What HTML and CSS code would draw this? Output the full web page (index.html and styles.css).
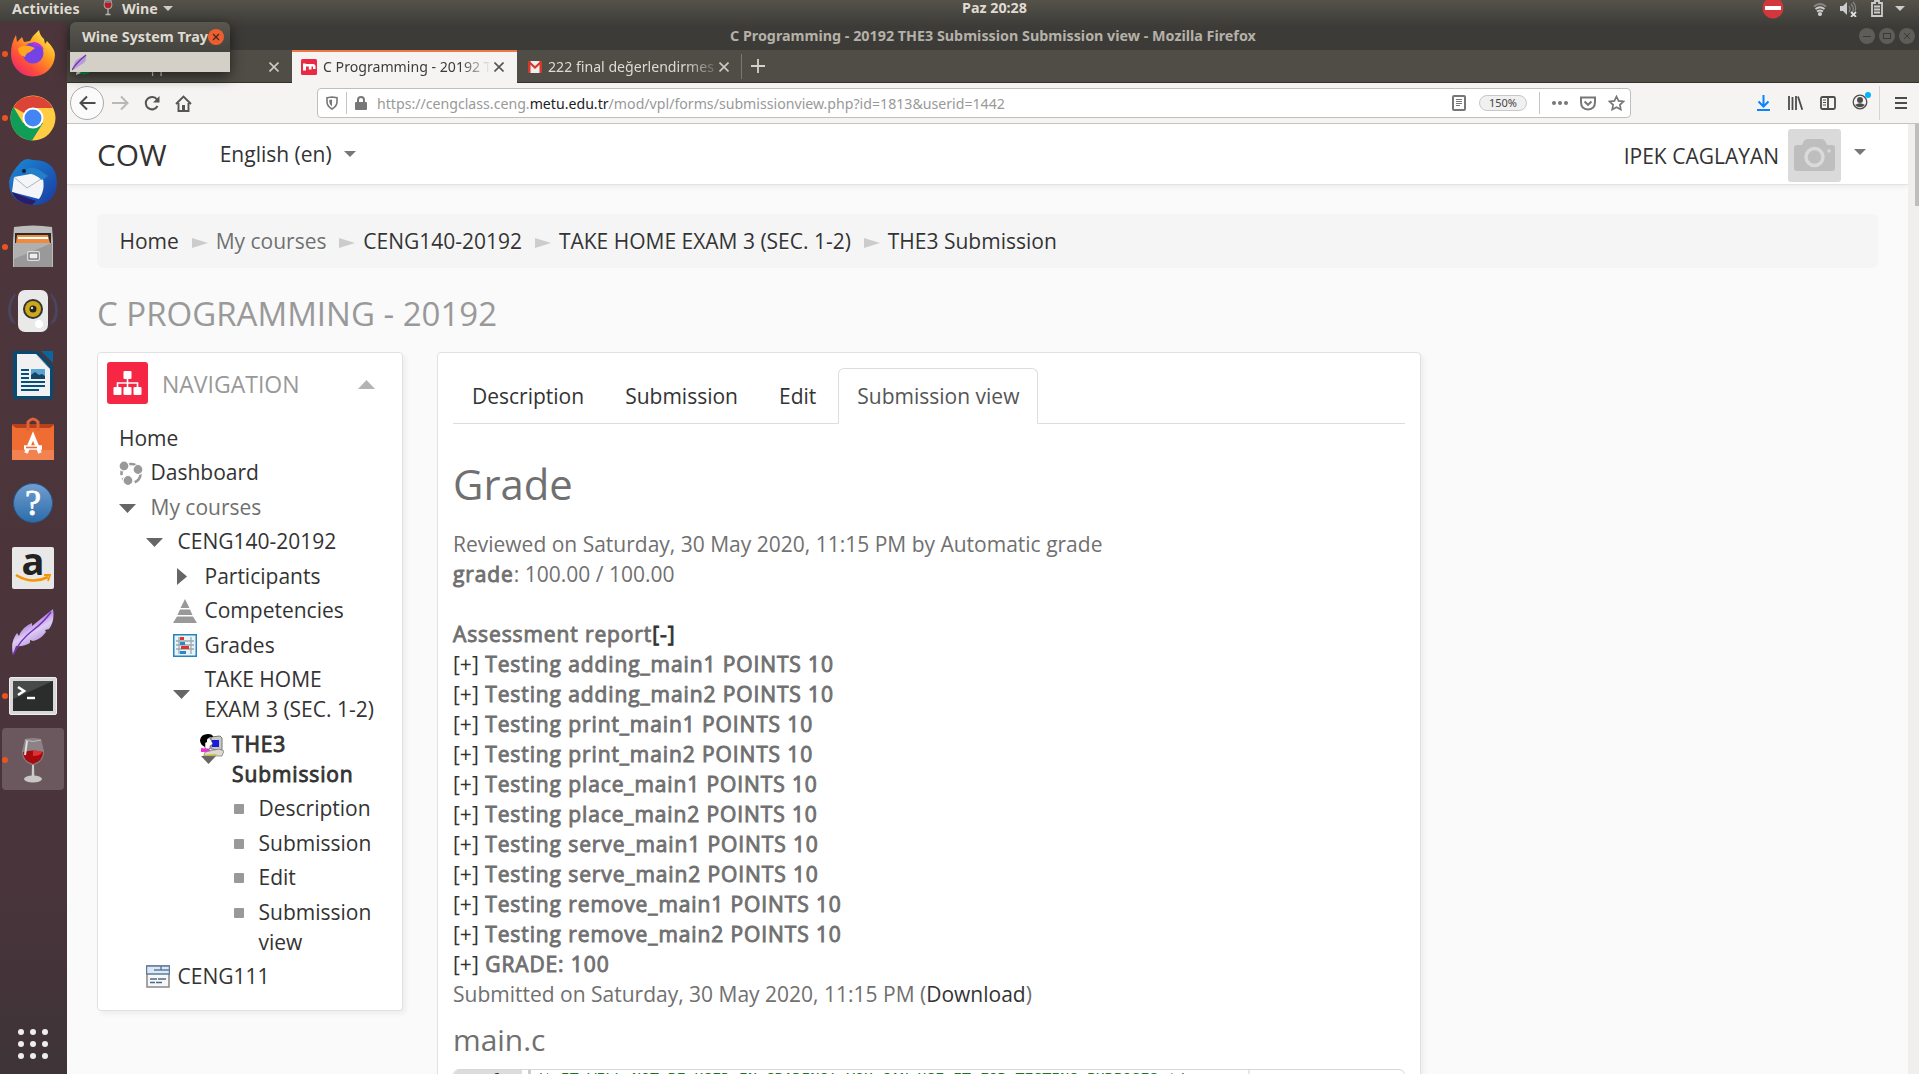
FILE: index.html
```
<!DOCTYPE html>
<html lang="en">
<head>
<meta charset="utf-8">
<title>C Programming - 20192 THE3 Submission Submission view</title>
<link rel="stylesheet" href="styles.css">
</head>
<body>
<header class="panel">
  <span class="panel-activities">Activities</span>
  <svg class="panel-app" width="12" height="18" viewBox="0 0 12 18"><path d="M3 1h6l1 5q0 4-4 4T2 6z" fill="#777" stroke="#bbb" stroke-width=".7"/><path d="M2.800 4h6.400v2Q9 9 6 9T2.800 6z" fill="#c4161c"/><path d="M6 10v5M3.500 15.500h5" stroke="#bbb" stroke-width="1.300"/></svg>
  <span>Wine</span>
  <svg class="panel-caret" width="10" height="6"><path d="M0 0h10L5 5z" fill="#ccc"/></svg>
  <span class="panel-clock">Paz 20:28</span>
  <div class="panel-status">
    <svg width="22" height="20" viewBox="0 0 22 20"><circle cx="11" cy="9" r="10.500" fill="#d4373b"/><rect x="3" y="7" width="16" height="4" fill="#fff"/></svg>
    <svg class="st-wifi" width="14" height="16" viewBox="0 0 14 16" fill="none" stroke="#ccc" stroke-width="1.800"><path d="M1 5.500q6-5 12 0" stroke="#888"/><path d="M2.500 8q4.500-3.500 9 0M4 10.500q3-2 6 0"/><circle cx="7" cy="13" r="1.200" fill="#ccc"/></svg>
    <svg class="st-sound" width="17" height="16" viewBox="0 0 17 16"><path d="M0 5h3l4-4v13l-4-4H0z" fill="#ccc"/><path d="M9 5q2 3 0 6M11 3q4 4 1 9M13 1q4 4 2 9" stroke="#888" fill="none" stroke-width="1.200"/><path d="M11 11l5 5M16 11l-5 5" stroke="#ddd" stroke-width="1.800"/></svg>
    <svg class="st-bat" width="12" height="17" viewBox="0 0 12 17"><path d="M1 3h3V1h4v2h3v13H1z" fill="none" stroke="#ccc" stroke-width="1.800"/><path d="M3 6.500h6M3 9.500h6M3 12.500h6" stroke="#ccc" stroke-width="1.800"/></svg>
    <svg class="st-caret" width="10" height="6"><path d="M0 0h10L5 5z" fill="#ccc"/></svg>
  </div>
</header>

<div class="desktop">
<nav class="dock">
  <div class="dock-item running"><svg width="46" height="48" viewBox="0 0 46 48"><defs><linearGradient id="ff" x1="0" y1="1" x2=".8" y2="0"><stop offset="0" stop-color="#e31587"/><stop offset=".35" stop-color="#ff4f3a"/><stop offset=".65" stop-color="#ff9a20"/><stop offset="1" stop-color="#fff44f"/></linearGradient></defs><path d="M6 5l1 7 5-5 2 5 6-1 3-5 6-6q1 6 5 9l1 5 2-3q8 8 8 14A22 22 0 0 1 1 24Q1 13 6 5z" fill="url(#ff)"/><circle cx="23" cy="23" r="10.500" fill="#7542e5"/><path d="M8 18q8-5 17 0l-5 4q-4 1-5 5-7-2-7-9z" fill="#ffa51f"/><path d="M23 12q8 0 11 8-5-5-11-4z" fill="#b833e1"/></svg></div>
  <div class="dock-item running"><svg width="46" height="46" viewBox="0 0 46 46"><circle cx="23" cy="23" r="22.500" fill="#fc4"/><path d="M23 23L3.500 12A22.500 22.500 0 0 1 42.500 12.500z" fill="#db4437"/><path d="M3.500 12A22.500 22.500 0 0 0 22 45.500L33 28 23 23 13 28z" fill="#0f9d58"/><path d="M23 13h20L33 28z" fill="#fc4"/><circle cx="23" cy="23" r="10.500" fill="#fff"/><circle cx="23" cy="23" r="8.500" fill="#4285f4"/></svg></div>
  <div class="dock-item"><svg width="50" height="48" viewBox="0 0 50 48"><defs><linearGradient id="tb" x1="0" y1="0" x2="1" y2="1"><stop offset="0" stop-color="#1a8bd8"/><stop offset="1" stop-color="#1b3aa0"/></linearGradient></defs><path d="M12 5q6-6 12-3 25-1 25 24-2 21-24 21Q1 45 1 24q1-8 11-19z" fill="url(#tb)"/><path d="M4 34l2-15 27-5q6 16-2 27z" fill="#f4f5f8"/><path d="M6 19l13 11 14-9" fill="none" stroke="#b0b4bd"/><path d="M4 34l24 9-4 4Q8 45 4 34z" fill="#2a1d6d"/><path d="M15 15q7-12 25 3l-6 4q-9-8-19-7z" fill="#237fc9"/><circle cx="16" cy="13" r="2" fill="#123"/></svg></div>
  <div class="dock-item running"><svg width="42" height="44" viewBox="0 0 42 44"><path d="M2 2q19-3 38 0l1 14v26H1V16z" fill="#bcbcbc"/><path d="M3 8h36v13H3z" fill="#2c2a28"/><path d="M5 10h31l2 8H4z" fill="#f08a3c"/><path d="M6 13h30" stroke="#fff" stroke-width="2"/><rect x="2" y="18" width="38" height="24" fill="#999"/><path d="M2 18h38L2 34z" fill="#b0b0b0"/><rect x="15" y="26" width="13" height="10" rx="2" fill="#ddd"/><rect x="17" y="28" width="9" height="6" fill="#eee" stroke="#555"/></svg></div>
  <div class="dock-item"><svg width="50" height="46" viewBox="0 0 50 46"><path d="M7 6q-10 16 0 30M43 6q10 16 0 30M4 10q-6 13 0 24M46 10q6 13 0 24" fill="none" stroke="#4b4562" stroke-width="2"/><rect x="10" y="2" width="30" height="42" rx="7" fill="#e9e9e9"/><circle cx="25" cy="21" r="10" fill="#333"/><circle cx="25" cy="21" r="8" fill="#cda81a"/><circle cx="25" cy="21" r="3.500" fill="#222"/><circle cx="24" cy="20" r="1.200" fill="#ddd"/><circle cx="31" cy="36" r="4" fill="#fff"/></svg></div>
  <div class="dock-item"><svg width="40" height="48" viewBox="0 0 40 48"><path d="M2 0h22l16 15v31q0 2-2 2H2q-2 0-2-2V2q0-2 2-2z" fill="#074a74"/><path d="M28 0h12v12z" fill="#0b659e"/><path d="M4 3h19l14 15v27H4z" fill="#f1f1f1"/><path d="M23 3l14 15" stroke="#aaa"/><path d="M8 19h8M8 23h8M8 27h8M8 31h24M8 35h24M8 39h18" stroke="#07507d" stroke-width="2"/><rect x="18" y="18" width="14" height="10" fill="#58a5d5"/><path d="M18 28v-4l4-3 4 3 3-1 3 2v3z" fill="#174562"/></svg></div>
  <div class="dock-item"><svg width="42" height="44" viewBox="0 0 42 44"><path d="M0 7h42v8H0z" fill="#b8401a"/><path d="M0 8l4 3h34l4-3v35H0z" fill="#ef6c32"/><path d="M0 33h42v10H0z" fill="#f28350"/><path d="M16 14V5q5-6 10 0v9" fill="none" stroke="#e0633a" stroke-width="3"/><path d="M14 36l7-17 7 17" fill="none" stroke="#fff" stroke-width="3.600"/><path d="M12 30.500h18" stroke="#fff" stroke-width="4.500"/><path d="M14 30.500h11" stroke="#ef6c32" stroke-width="1.600"/></svg></div>
  <div class="dock-item"><svg width="42" height="42" viewBox="0 0 42 42"><defs><linearGradient id="hp" x1="0" y1="0" x2="0" y2="1"><stop offset="0" stop-color="#719ed0"/><stop offset="1" stop-color="#2c6ca9"/></linearGradient></defs><circle cx="21" cy="21" r="19.500" fill="url(#hp)" stroke="#235a91"/><text x="21" y="33" class="help-mark">?</text></svg></div>
  <div class="dock-item"><svg width="42" height="42" viewBox="0 0 42 42"><rect width="42" height="42" rx="2" fill="#e8e8e8"/><text x="21" y="28" class="amazon-mark">a</text><path d="M4 28q16 10 32 2" fill="none" stroke="#f79400" stroke-width="2.600"/><path d="M32 28h6l-2 6" fill="none" stroke="#f79400" stroke-width="1.800"/></svg></div>
  <div class="dock-item"><svg width="42" height="48" viewBox="0 0 42 48"><defs><linearGradient id="fe" x1="0" y1="0" x2=".5" y2="1"><stop offset="0" stop-color="#8a47c8"/><stop offset=".35" stop-color="#a774da"/><stop offset=".6" stop-color="#dccdf3"/><stop offset="1" stop-color="#a274d6"/></linearGradient></defs><path d="M1 47q-3-13 4-22l2 3q3-9 13-13l0 3Q30 10 41 1q2 12-4 20l-4 1 1 2q-6 8-13 9l-3-1 0 3q-8 4-14 3z" fill="url(#fe)"/><path d="M1 47Q8 32 20 23T39 4" fill="none" stroke="#7a2fc0" stroke-width="1.500"/></svg></div>
  <div class="dock-item running"><svg width="48" height="38" viewBox="0 0 48 38"><rect x=".5" y=".5" width="47" height="37" rx="1.500" fill="#d8d8d8" stroke="#eee"/><rect x="4" y="4" width="40" height="30" fill="#2b2d2c"/><path d="M4 4h40L4 22z" fill="#484a49"/><path d="M9 10l6 4-6 4" fill="none" stroke="#fff" stroke-width="2.600"/><path d="M18 21h8" stroke="#fff" stroke-width="2.400"/></svg></div>
  <div class="dock-item running active"><svg width="24" height="46" viewBox="0 0 24 46"><path d="M4 2q8-2 16 0l3 12q0 10-8 13l-2 1 1 12H10l1-12-2-1Q1 24 1 14z" fill="#8c8286"/><path d="M4 3q8 3 16 0" fill="none" stroke="#bbb"/><path d="M2 15q10-3 20 0 0 9-10 12Q2 24 2 15z" fill="#a80a0d"/><path d="M12 14q6-1 9 1-1 4-9 4z" fill="#e03033"/><ellipse cx="12" cy="42" rx="9" ry="3.500" fill="#c9c7c4"/><path d="M12 28v12" stroke="#ccc" stroke-width="2"/><path d="M6 4L4 18" stroke="#ddd" stroke-width="2"/></svg></div>
  <div class="dock-apps"><i></i><i></i><i></i><i></i><i></i><i></i><i></i><i></i><i></i></div>
</nav>

<main class="browser">
  <div class="titlebar">
    <span class="title">C Programming - 20192 THE3 Submission Submission view - Mozilla Firefox</span>
    <div class="winbtns">
      <svg width="16" height="16"><circle cx="8" cy="8" r="8" fill="#5f5d57"/><path d="M4 8.500h8" stroke="#3a3935"/></svg>
      <svg width="16" height="16"><circle cx="8" cy="8" r="8" fill="#5f5d57"/><rect x="4.500" y="5.500" width="7" height="5" fill="none" stroke="#3a3935"/></svg>
      <svg width="16" height="16"><circle cx="8" cy="8" r="8" fill="#5f5d57"/><path d="M5 5l6 6M11 5l-6 6" stroke="#3a3935"/></svg>
    </div>
  </div>
  <div class="tabbar">
    <div class="tab first">
      <svg width="17" height="17" viewBox="0 0 17 17"><circle cx="8.500" cy="8.500" r="8" fill="#12a24b"/><path d="M0 17l1-5 4 3z" fill="#fff"/></svg>
      <span class="tab-label">WhatsApp</span>
      <svg class="x" width="10" height="10"><path d="M.5.5l9 9M9.500.5l-9 9" stroke="#cfcbc1" stroke-width="1.600"/></svg>
    </div>
    <div class="tab current">
      <svg width="16" height="16" viewBox="0 0 16 16"><rect width="16" height="16" rx="1.500" fill="#ea2a44"/><path d="M2 11.500V4.500h2.500l.5.500h7q2.500 0 2.500 2.500V10H12V7.500h-1.500v3H7.800v-3H5v4z" fill="#fff"/></svg>
      <span class="tab-label">C Programming - 20192 T</span>
      <svg class="x" width="10" height="10"><path d="M.5.5l9 9M9.500.5l-9 9" stroke="#555" stroke-width="1.600"/></svg>
    </div>
    <div class="tab mail">
      <svg width="14" height="12" viewBox="0 0 14 12"><path d="M0 0h14v12H0z" fill="#eee"/><path d="M0 0h2.500v12H0zM11.500 0H14v12h-2.500z" fill="#d5372b"/><path d="M1 1l6 5.500L13 1" fill="none" stroke="#d5372b" stroke-width="2.200"/></svg>
      <span class="tab-label">222 final değerlendirmes</span>
      <svg class="x" width="10" height="10"><path d="M.5.5l9 9M9.500.5l-9 9" stroke="#cfcbc1" stroke-width="1.600"/></svg>
    </div>
    <svg class="plus" width="14" height="14"><path d="M7 0v14M0 7h14" stroke="#d5d2ca" stroke-width="1.800"/></svg>
  </div>
  <div class="toolbar">
    <span class="back"><svg width="17" height="16" viewBox="0 0 17 16" fill="none" stroke="#4c4c4c" stroke-width="2"><path d="M16.500 8H1.500M8 1.500L1.500 8 8 14.500"/></svg></span>
    <svg class="fwd" width="17" height="16" viewBox="0 0 17 16" fill="none" stroke="#b8b8b8" stroke-width="2"><path d="M0 8h15M9 1.500L15.500 8 9 14.500"/></svg>
    <svg class="reload" width="16" height="16" viewBox="0 0 16 16"><path d="M13.500 11A6.200 6.200 0 1 1 13 4.500" fill="none" stroke="#555" stroke-width="2"/><path d="M15.500 1v6.500H9z" fill="#555"/></svg>
    <svg class="home" width="17" height="17" viewBox="0 0 17 17" fill="none" stroke="#555" stroke-width="1.900"><path d="M1 9L8.500 1.500 16 9M3.500 8v8h10V8"/><path d="M8.500 10v6" stroke-width="3"/></svg>
    <div class="urlbar">
      <svg class="shield" width="12" height="14" viewBox="0 0 12 14"><path d="M1 1.800L6 1l5 .8V6q0 4-5 7Q1 10 1 6z" fill="none" stroke="#777" stroke-width="1.600"/><path d="M6 3.500v7Q3.300 8.500 3.300 6V4z" fill="#777"/></svg>
      <i class="sep"></i>
      <svg width="12" height="14" viewBox="0 0 12 14"><rect y="6" width="12" height="8" rx="1" fill="#777"/><path d="M3 7V4q0-3 3-3t3 3v3" fill="none" stroke="#777" stroke-width="2"/></svg>
      <span class="url">https://cengclass.ceng.<b>metu.edu.tr</b>/mod/vpl/forms/submissionview.php?id=1813&amp;userid=1442</span>
      <svg class="reader" width="14" height="16" viewBox="0 0 14 16" fill="none" stroke="#777"><rect x="1" y="1" width="12" height="14" rx="1" stroke-width="2"/><path d="M4 4.500h6M4 6.500h6M4 8.500h6M4 10.500h4"/></svg>
      <span class="zoom">150%</span>
      <i class="sep tall"></i>
      <svg width="16" height="4"><g fill="#777"><circle cx="2" cy="2" r="2"/><circle cx="8" cy="2" r="2"/><circle cx="14" cy="2" r="2"/></g></svg>
      <svg class="pocket" width="16" height="15" viewBox="0 0 16 15" fill="none" stroke="#777" stroke-width="2"><path d="M1 2.500V1.500H15V6q0 7-7 7.500Q1 13 1 6z"/><path d="M4.500 5.500L8 8.800l3.500-3.300"/></svg>
      <svg class="star" width="17" height="16" viewBox="0 0 17 16" fill="none" stroke="#777" stroke-width="1.700"><path d="M8.500 1.500l2.100 4.400 4.900.6-3.600 3.300.9 4.700-4.300-2.300-4.300 2.300.9-4.700L1.500 6.500l4.900-.6z"/></svg>
    </div>
    <div class="tools">
      <svg width="13" height="16" viewBox="0 0 13 16" fill="none" stroke="#0a84ff" stroke-width="2"><path d="M6.500 0v11M1.500 6.500l5 5 5-5M0 15h13"/></svg>
      <svg width="15" height="14" viewBox="0 0 15 14" stroke="#4c4c4c" stroke-width="1.800"><path d="M1 0v14M4.500 1v13M8 0v14M10 .5l4.300 13.300"/></svg>
      <svg width="16" height="14" viewBox="0 0 16 14" fill="none" stroke="#4c4c4c" stroke-width="1.800"><rect x="1" y="1" width="14" height="12" rx="1.500"/><path d="M8 1v12"/><path d="M3 4h3M3 6.500h3M3 9h3" stroke-width="1"/></svg>
      <svg width="19" height="18" viewBox="0 0 19 18"><circle cx="8" cy="10" r="6.800" fill="none" stroke="#4c4c4c" stroke-width="1.300"/><circle cx="8" cy="8" r="3" fill="#4c4c4c"/><path d="M3 13q5-3.500 10 0-5 4.500-10 0z" fill="#4c4c4c"/><circle cx="16" cy="3" r="3" fill="#00b3ff"/></svg>
      <i class="tool-sep"></i>
      <svg width="12" height="12"><path d="M0 1h12M0 6h12M0 11h12" stroke="#4c4c4c" stroke-width="2"/></svg>
    </div>
  </div>

  <div class="viewport">
    <div class="page">
      <header class="site-header">
        <a class="brand">COW</a>
        <a class="lang">English (en)</a>
        <svg width="12" height="7"><path d="M0 0h12L6 6z" fill="#777"/></svg>
        <div class="user">
          <a>IPEK CAGLAYAN</a>
          <svg class="avatar" width="53" height="53" viewBox="0 0 53 53"><rect width="53" height="53" rx="3" fill="#dadada"/><path d="M9 16h5q2-6 5-6h15q3 0 5 6h5q3 0 3 3v20q0 3-3 3H9q-3 0-3-3V19q0-3 3-3z" fill="#bebebe"/><circle cx="26.500" cy="28" r="8.500" fill="none" stroke="#dadada" stroke-width="3.500"/><circle cx="41" cy="22" r="1.700" fill="#dadada"/></svg>
          <svg class="user-caret" width="12" height="7"><path d="M0 0h12L6 6z" fill="#777"/></svg>
        </div>
      </header>

      <nav class="breadcrumb">
        <a>Home</a><i></i><span>My courses</span><i></i><a>CENG140-20192</a><i></i><a>TAKE HOME EXAM 3 (SEC. 1-2)</a><i></i><a>THE3 Submission</a>
      </nav>

      <h1>C PROGRAMMING - 20192</h1>

      <div class="columns">
        <aside class="card side">
          <div class="side-head">
            <svg width="41" height="42" viewBox="0 0 41 42"><rect width="41" height="42" rx="3" fill="#f52745"/><g fill="#fff"><rect x="16.500" y="9" width="8" height="8" rx="1"/><rect x="6.500" y="25" width="8" height="8" rx="1"/><rect x="16.500" y="25" width="8" height="8" rx="1"/><rect x="26.500" y="25" width="8" height="8" rx="1"/></g><path d="M20.500 16v10M10.500 26v-5h20v5" fill="none" stroke="#fff" stroke-width="1.600"/></svg>
            <h2>NAVIGATION</h2>
            <svg class="collapse" width="17" height="9"><path d="M0 9h17L8.500 0z" fill="#b3b3b3"/></svg>
          </div>
          <ul class="tree">
            <li><a>Home</a></li>
            <li class="l1"><svg width="24" height="24" viewBox="0 0 24 24"><circle cx="12" cy="12.500" r="9.500" fill="none" stroke="#999" stroke-width="2.600" stroke-dasharray="11 3"/><g fill="#999" stroke="#fff" stroke-width="1.200"><circle cx="5" cy="5" r="5"/><circle cx="19" cy="8.500" r="5"/><circle cx="9" cy="19.500" r="5"/></g></svg><a>Dashboard</a></li>
            <li class="l1"><svg width="17" height="9"><path d="M0 0h17L8.500 9z" fill="#666"/></svg><span>My courses</span></li>
            <li class="l2"><svg width="17" height="9"><path d="M0 0h17L8.500 9z" fill="#666"/></svg><a>CENG140-20192</a></li>
            <li class="l3"><svg class="closed" width="10" height="17"><path d="M0 0v17L10 8.500z" fill="#666"/></svg><a>Participants</a></li>
            <li class="l3"><svg width="24" height="24" viewBox="0 0 24 24"><path d="M12 0l4.500 9h-9zM7 10.500h10l2.500 5.500h-15zM4 17.500h16L24 24H0z" fill="#999"/></svg><a>Competencies</a></li>
            <li class="l3"><svg width="24" height="24" viewBox="0 0 24 24"><rect x=".75" y=".75" width="22.500" height="21.500" fill="#eaf3f8" stroke="#2385bb" stroke-width="1.500"/><path d="M3 7h18M3 11h18M3 15h18M6 3v17M18 3v17" stroke="#9aabb0" stroke-width="1.300"/><path d="M7 3h4v3H7zM8 12h8v3H8z" fill="#e53127"/><path d="M7 8h5v3H7zM7 17h6v3H7z" fill="#268bc9"/></svg><a>Grades</a></li>
            <li class="l3"><svg class="mid" width="17" height="9"><path d="M0 0h17L8.500 9z" fill="#666"/></svg><a>TAKE HOME EXAM 3 (SEC. 1-2)</a></li>
            <li class="l4"><svg class="person" width="24" height="30" viewBox="0 0 24 30"><path d="M1 22h15l-7.500 8z" fill="#666"/><path d="M11 3l9-1 2 2v12l-11-1z" fill="#c9c9c4" stroke="#777"/><rect x="12" y="6" width="7" height="7" fill="#1b1be0"/><path d="M5 4h5l3 6-3 2v3H5z" fill="#fff" stroke="#333" stroke-width=".6"/><path d="M0 6q1-6 8-6 5 0 5 3-7 0-6 5l-2 1v4Q0 11 0 6z" fill="#000"/><path d="M1 14l8 1 3 3H1z" fill="#f32be0"/><path d="M5 18l14-3 5 2-2 5H4z" fill="#dcdad0" stroke="#777" stroke-width=".7"/><path d="M3 21l14-1-2 2H4z" fill="#c9b93a"/></svg><a class="strong">THE3 Submission</a></li>
            <li class="l5"><i></i><a>Description</a></li>
            <li class="l5"><i></i><a>Submission</a></li>
            <li class="l5"><i></i><a>Edit</a></li>
            <li class="l5"><i></i><a>Submission view</a></li>
            <li class="l2"><svg width="24" height="24" viewBox="0 0 24 24"><rect x="1" y="1" width="22" height="21" fill="#f7f7f7" stroke="#888" stroke-width="1.500"/><path d="M.5 1h23v8H.5z" fill="#dce8f3" stroke="#5c7d9d" stroke-width="1.500"/><path d="M8 5h15M15 1v4" stroke="#5c7d9d" stroke-width="1.500"/><path d="M4 14h7M12 14h8M4 17.500h5M10 17.500h6" stroke="#4d6a8b" stroke-width="1.600"/></svg><a>CENG111</a></li>
          </ul>
        </aside>

        <section class="card content">
          <div class="tabs"><a>Description</a><a>Submission</a><a>Edit</a><a class="on">Submission view</a></div>
          <h2 class="grade-title">Grade</h2>
          <p>Reviewed on Saturday, 30 May 2020, 11:15 PM by Automatic grade</p>
          <p><b>grade</b>: 100.00 / 100.00</p>
          <p class="report-head"><b>Assessment report<a>[-]</a></b></p>
          <div class="report">
          <p><a>[+]</a> <b>Testing adding_main1 POINTS 10</b></p>
          <p><a>[+]</a> <b>Testing adding_main2 POINTS 10</b></p>
          <p><a>[+]</a> <b>Testing print_main1 POINTS 10</b></p>
          <p><a>[+]</a> <b>Testing print_main2 POINTS 10</b></p>
          <p><a>[+]</a> <b>Testing place_main1 POINTS 10</b></p>
          <p><a>[+]</a> <b>Testing place_main2 POINTS 10</b></p>
          <p><a>[+]</a> <b>Testing serve_main1 POINTS 10</b></p>
          <p><a>[+]</a> <b>Testing serve_main2 POINTS 10</b></p>
          <p><a>[+]</a> <b>Testing remove_main1 POINTS 10</b></p>
          <p><a>[+]</a> <b>Testing remove_main2 POINTS 10</b></p>
          <p><a>[+]</a> <b>GRADE: 100</b></p>
          </div>
          <p>Submitted on Saturday, 30 May 2020, 11:15 PM (<a>Download</a>)</p>
          <h3>main.c</h3>
          <div class="editor"><span class="gutter">1</span><code>/* IT WILL NOT BE USED IN GRADING! YOU CAN USE IT FOR TESTING PURPOSES */</code></div>
        </section>
      </div>
    </div>
    <div class="scrollbar"><i></i></div>
  </div>
</main>
</div>

<div class="tray">
  <div class="tray-title"><span>Wine System Tray</span><svg width="16" height="16"><circle cx="8" cy="8" r="8" fill="#ec5f31"/><path d="M5 5l6 6M11 5l-6 6" stroke="#4b2618" stroke-width="1.300"/></svg></div>
  <div class="tray-body"><svg width="15" height="17" viewBox="0 0 15 17"><path d="M1 16Q1 8 6 5L14 1q1 7-4 9z" fill="#b79bdc"/><path d="M0 16Q4 9 14 1" fill="none" stroke="#7331ad" stroke-width="1.300"/></svg></div>
</div>
</body>
</html>
```
FILE: styles.css
```
* { box-sizing: border-box; }
html, body { margin: 0; height: 100%; overflow: hidden; }
body {
  display: flex;
  flex-direction: column;
  width: 1919px;
  height: 1074px;
  background: #3c3b37;
  font-family: "Noto Sans", sans-serif;
  font-size: 14px;
}
svg { display: block; flex: none; }
h1, h2, h3, p, ul { margin: 0; padding: 0; font-weight: 400; }

/* Top panel */
.panel {
  position: relative;
  flex: none;
  display: flex;
  align-items: center;
  height: 22px;
  padding: 0 14px 5px 12px;
  background: linear-gradient(#55524a, #403f3a);
  color: #dfdbd2;
  font-weight: 700;
  font-size: 14.300px;
  line-height: 17px;
}
.panel-activities { letter-spacing: .15px; }
.panel-app { margin: -2px 8px 0 22px; }
.panel-caret { margin-left: 5px; }
.panel-clock { position: absolute; left: 962px; top: -1px; }
.panel-status { display: flex; align-items: center; margin-left: auto; }
.st-wifi { margin-left: 29px; }
.st-sound { margin-left: 13px; }
.st-bat { margin-left: 14px; }
.st-caret { margin-left: 12px; }

.desktop { flex: 1; display: flex; min-height: 0; }

/* Dock */
.dock {
  flex: none;
  display: flex;
  flex-direction: column;
  width: 67px;
  background: linear-gradient(#4d363b, #4a343b 80%, #3e3438);
}
.dock-item {
  position: relative;
  flex: none;
  display: flex;
  align-items: center;
  justify-content: center;
  height: 64.200px;
  padding-right: 1px;
}
.dock-item.running::before {
  content: "";
  position: absolute;
  left: 2px;
  top: 29px;
  width: 6px;
  height: 6px;
  border-radius: 50%;
  background: #e95420;
}
.dock-item.active::after {
  content: "";
  position: absolute;
  left: 2px;
  top: 0;
  width: 62px;
  height: 62px;
  border-radius: 4px;
  background: rgba(255, 255, 255, .18);
  z-index: 0;
}
.dock-item.active svg { position: relative; z-index: 1; }
.dock-item.active::before { z-index: 1; }
.help-mark { font: 36px "Liberation Serif", serif; fill: #fff; stroke: #fff; stroke-width: .8px; text-anchor: middle; }
.amazon-mark { font: 700 38px "Open Sans", sans-serif; fill: #222; text-anchor: middle; }
.dock-apps {
  display: grid;
  grid-template-columns: repeat(3, 6px);
  gap: 6px;
  margin: auto 0 15px 18px;
}
.dock-apps i { width: 6px; height: 6px; border-radius: 50%; background: #eee; }

/* Browser chrome */
.browser { flex: 1; display: flex; flex-direction: column; min-width: 0; }
.titlebar {
  flex: none;
  position: relative;
  display: flex;
  align-items: center;
  justify-content: flex-end;
  height: 28px;
  padding: 0 4px;
  background: linear-gradient(#403f3a, #3c3b37 5px);
}
.title {
  position: absolute;
  left: 663px;
  top: 4px;
  color: #b5b1a8;
  font-weight: 700;
  font-size: 14.320px;
  line-height: 20px;
  white-space: nowrap;
}
.winbtns { display: flex; gap: 4px; }
.tabbar {
  flex: none;
  display: flex;
  align-items: center;
  height: 33px;
  background: #504d46;
  border-bottom: 1px solid #33322e;
  color: #dfdbd2;
}
.tab {
  display: flex;
  align-items: center;
  width: 225px;
  height: 32px;
  padding: 1px 13px 0 9px;
  white-space: nowrap;
}
.tab.current {
  height: 33px;
  margin-bottom: -1px;
  background: #f5f4f3;
  color: #3c3c3c;
  border-top: 2px solid #f07746;
  padding-top: 0;
  padding-bottom: 1px;
}
.tab.mail { padding-left: 11px; padding-right: 12px; border-right: 1px solid transparent; }
.tab.mail { border-image: linear-gradient(transparent 5px, #7b7871 5px, #7b7871 28px, transparent 28px) 1; }
.tab-label {
  width: 165px;
  margin-left: 7px;
  overflow: hidden;
  font-size: 14.130px;
  line-height: 20px;
  -webkit-mask-image: linear-gradient(90deg, #000 82%, transparent);
  mask-image: linear-gradient(90deg, #000 82%, transparent);
}
.tab.current .tab-label { width: 168px; margin-left: 6px; }
.tab.mail .tab-label {
  width: 170px;
  margin-left: 6px;
  -webkit-mask-image: linear-gradient(90deg, #000 80%, rgba(0, 0, 0, .15));
  mask-image: linear-gradient(90deg, #000 80%, rgba(0, 0, 0, .15));
}
.tab .x { margin-left: auto; }
.plus { margin-left: 9px; }
.toolbar {
  flex: none;
  display: flex;
  align-items: center;
  height: 41px;
  padding-left: 3px;
  background: #f5f4f2;
  border-bottom: 1px solid #c5c4c2;
}
.back {
  display: flex;
  align-items: center;
  justify-content: center;
  width: 34px;
  height: 34px;
  border: 1px solid #aaa;
  border-radius: 50%;
  background: #fbfbfb;
}
.fwd { margin-left: 8px; }
.reload { margin-left: 15px; }
.home { margin-left: 15px; }
.urlbar {
  display: flex;
  align-items: center;
  width: 1314px;
  height: 30px;
  margin-left: 125px;
  padding: 0 5px 0 8px;
  border: 1px solid #c0bfbd;
  border-radius: 4px;
  background: #fff;
}
.sep { width: 1px; height: 22px; margin: 0 8px; background: #c4c4c4; }
.url { margin: 1px 0 0 10px; color: #999; font-size: 14.150px; line-height: 20px; white-space: nowrap; }
.url b { color: #222; font-weight: 400; }
.reader { margin-left: auto; }
.zoom {
  width: 48px;
  height: 16px;
  margin: 0 0 0 13px;
  border: 1px solid #c8c8c8;
  border-radius: 8px;
  background: #f0f0f0;
  color: #444;
  font-size: 11px;
  line-height: 14px;
  text-align: center;
}
.sep.tall { margin: 0 12px; }
.pocket { margin-left: 12px; }
.star { margin-left: 12px; }
.tools { display: flex; align-items: center; margin-left: auto; padding-right: 12px; }
.tools svg { margin-left: 17px; }
.tools svg:first-child { margin-left: 0; }
.tools svg:nth-child(2) { margin-left: 18px; }
.tools svg:nth-child(4) { margin: -4px 0 0 16px; }
.tool-sep { width: 1px; height: 34px; margin-left: 8px; background: #d5d4d2; }
.tools svg:last-child { margin-left: 15px; }

/* Page */
.viewport { flex: 1; display: flex; min-height: 0; }
.page {
  flex: 1;
  min-width: 0;
  overflow: hidden;
  background: #fafafa;
  color: #707070;
  font-family: "Open Sans", sans-serif;
  font-size: 21px;
  line-height: 30px;
}
.page a { color: #333; }
.page b { font-weight: 400; -webkit-text-stroke: .9px currentColor; letter-spacing: .890px; }
.scrollbar { flex: none; width: 11px; background: #f0efee; }
.scrollbar i { display: block; width: 4px; height: 82px; margin-left: 7px; background: #bfbebc; }
.site-header {
  display: flex;
  align-items: center;
  height: 61px;
  padding-left: 30px;
  background: #fff;
  border-bottom: 1px solid #e3e3e3;
  box-shadow: 0 1px 6px rgba(0, 0, 0, .08);
}
.brand { margin-top: 1px; font-size: 29.900px; }
.lang { margin: 0 12px 0 53px; }
.user { display: flex; align-items: center; margin: 2px 0 0 auto; padding-right: 42px; }
.user a { margin-top: 2px; }
.avatar { margin-left: 9px; }
.user-caret { margin: -6px 0 0 13px; }
.breadcrumb {
  display: flex;
  align-items: center;
  height: 54px;
  margin: 29px 30px 0;
  padding-left: 22.500px;
  border-radius: 6px;
  background: #f5f5f5;
  text-shadow: 0 1px 0 #fff;
}
.breadcrumb i {
  width: 16px;
  height: 0;
  margin: 4px 8px 0 12.800px;
  border: 5px solid transparent;
  border-left: 16px solid #ccc;
  border-right: 0;
}
h1 { margin: 23px 0 0 30px; color: #999; font-size: 33px; line-height: 46px; }
.columns { display: flex; align-items: flex-start; gap: 34px; margin: 15px 0 0 30px; }
.card {
  border: 1px solid #e1e1e1;
  border-radius: 4px;
  background: #fff;
  box-shadow: 3px 3px 5px rgba(0, 0, 0, .05);
}
.side { width: 306px; height: 659px; padding: 9px 9px; }
.side-head { display: flex; align-items: center; }
.side-head h2 { margin: 1px 0 0 14px; color: #999; font-size: 23px; }
.collapse { margin: 3px 18px 0 auto; }
.tree { margin: 18.800px 14px 0 12px; list-style: none; }
.tree li { display: flex; margin-bottom: 4.500px; }
.tree svg { margin-top: 4px; }
.tree svg[height="9"] { margin-top: 12px; }
.tree svg[height="9"].mid { margin-top: 26px; }
.tree .closed { margin: 7px 0 0 5px; }
.tree .person { margin-top: 5px; }
.tree .l1 { padding-left: 31.500px; }
.tree .l2 { padding-left: 58.500px; }
.tree .l3 { padding-left: 85.500px; }
.tree .l4 { padding-left: 113px; }
.tree .l5 { padding-left: 139.500px; }
.tree .l1 svg, .tree .l2 svg, .tree .l3 svg, .tree .l4 svg { margin-left: -32px; }
.tree .l3 .closed { margin-left: -28px; }
.tree svg[width="24"] { margin-right: 8px; }
.tree svg[width="17"] { margin-right: 15px; }
.tree .closed { margin-right: 18px; }
.tree .l5 i { width: 10px; height: 10px; margin: 11px 15px 0 -25px; border-radius: 1px; background: #999; flex: none; }
.tree .strong { -webkit-text-stroke: .9px currentColor; letter-spacing: .880px; }

.content { width: 984px; height: 760px; padding: 15px 15px 0; }
.tabs { display: flex; height: 56px; border-bottom: 1px solid #ddd; margin-bottom: 30px; }
.tabs a {
  height: 56px;
  margin-right: 3px;
  padding: 12px 18px 0;
  border: 1px solid transparent;
  border-radius: 6px 6px 0 0;
}
.tabs .on { border-color: #ddd; border-bottom-color: #fff; background: #fff; color: #555; }
.grade-title { margin-bottom: 15px; font-size: 41.800px; line-height: 60px; }
.report-head { margin-top: 30px; }
.report b { margin-left: 1px; }
.content h3 { margin-top: 16px; font-size: 29.900px; line-height: 30px; }
.editor {
  display: flex;
  height: 60px;
  margin-top: 14px;
  overflow: hidden;
  border: 1px solid #d5d8d5;
  border-radius: 6px 6px 0 0;
  background: linear-gradient(90deg, transparent 794px, #e8e8e8 794px, #e8e8e8 796px, transparent 796px);
  font-family: "DejaVu Sans Mono", monospace;
  font-size: 14.820px;
  line-height: 15px;
}
.gutter { width: 68px; padding-right: 20px; background: #dcdcdc; color: #333; text-align: right; }
.editor code {
  margin-left: 6px;
  padding-left: 3px;
  border-left: 3px solid #ccc;
  color: #236e24;
  font: inherit;
  white-space: nowrap;
}

/* Floating tray window */
.tray {
  position: absolute;
  left: 70px;
  top: 22px;
  width: 160px;
  height: 50px;
  border-radius: 6px 6px 0 0;
  box-shadow: 0 4px 14px rgba(0, 0, 0, .6);
}
.tray-title {
  display: flex;
  align-items: center;
  height: 30px;
  padding: 0 0 1px 12px;
  border-radius: 6px 6px 0 0;
  background: linear-gradient(#5a574f, #43423d);
  color: #dfdbd2;
  font-weight: 700;
  font-size: 14.340px;
  white-space: nowrap;
}
.tray-body { height: 20px; padding: 2px; background: #d4cfc7; }
```
